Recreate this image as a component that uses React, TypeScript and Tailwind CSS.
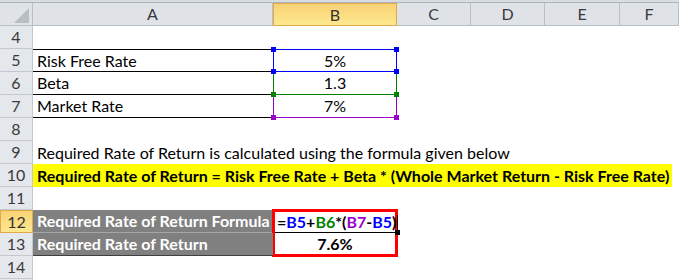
function RowHead({ n, active }: { n?: number; active?: boolean }) {
  if (active) {
    return (
      <div className="flex items-center justify-center border border-[#e0a94c] bg-gradient-to-b from-[#f9d276] to-[#fde88e] text-[#333]">
        {n}
      </div>
    )
  }
  return (
    <div className="flex items-center justify-center border-r border-b border-[#c3c8ce] bg-[#e4e7eb] text-[#3a3a3a]">
      {n}
    </div>
  )
}

function ColHead({ label, active }: { label: string; active?: boolean }) {
  if (active) {
    return (
      <div className="flex items-center justify-center border border-[#e0a94c] bg-gradient-to-b from-[#f9d276] to-[#fde88e] text-[#333]">
        {label}
      </div>
    )
  }
  return (
    <div className="flex items-center justify-center border-r border-b border-[#b9bfc7] bg-[#dfe3e8] text-[#3a3a3a]">
      {label}
    </div>
  )
}

function Handle({ color, pos }: { color: string; pos: string }) {
  return <span className={`absolute h-[5px] w-[5px] ${pos}`} style={{ backgroundColor: color }} />
}

export default function App() {
  return (
    <div className="h-[280px] w-[679px] overflow-hidden bg-white font-['Lato','Liberation_Sans',sans-serif] text-[16px] text-black">
      {/* top strip */}
      <div className="h-[3px] border-b border-[#aeb5bd] bg-[#d9dde2]" />

      <div className="grid grid-cols-[33px_240px_124px_74px_74px_75px_1fr] auto-rows-[23px]">
        {/* header row */}
        <div className="relative border-r border-b border-[#b9bfc7] bg-[#dfe3e8]">
          <svg className="absolute right-[3px] bottom-[2px]" width="15" height="15" viewBox="0 0 15 15">
            <polygon points="15,0 15,15 0,15" fill="#b9bec5" />
          </svg>
        </div>
        <ColHead label="A" />
        <ColHead label="B" active />
        <ColHead label="C" />
        <ColHead label="D" />
        <ColHead label="E" />
        <ColHead label="F" />

        {/* 4 */}
        <RowHead n={4} />
        <div className="col-span-6" />

        {/* 5 */}
        <RowHead n={5} />
        <div className="flex items-center border-y border-black pl-1">Risk Free Rate</div>
        <div className="relative flex items-center justify-center border border-[#0000ff]">
          5%
          <Handle color="#0000ff" pos="-left-[3px] -top-[3px]" />
          <Handle color="#0000ff" pos="-right-[3px] -top-[3px]" />
          <Handle color="#0000ff" pos="-left-[3px] -bottom-[3px] z-20" />
          <Handle color="#0000ff" pos="-right-[3px] -bottom-[3px] z-20" />
        </div>
        <div className="col-span-4" />

        {/* 6 */}
        <RowHead n={6} />
        <div className="flex items-center border-b border-black pl-1">Beta</div>
        <div className="relative flex items-center justify-center border-x border-b border-[#008000]">
          1.3
          <Handle color="#008000" pos="-left-[3px] -bottom-[3px] z-10" />
          <Handle color="#008000" pos="-right-[3px] -bottom-[3px] z-10" />
        </div>
        <div className="col-span-4" />

        {/* 7 */}
        <RowHead n={7} />
        <div className="flex items-center border-b border-black pl-1">Market Rate</div>
        <div className="relative flex items-center justify-center border-x border-b border-[#9900cc]">
          7%
          <Handle color="#9900cc" pos="-left-[3px] -bottom-[3px]" />
          <Handle color="#9900cc" pos="-right-[3px] -bottom-[3px]" />
        </div>
        <div className="col-span-4" />

        {/* 8 */}
        <RowHead n={8} />
        <div className="col-span-6" />

        {/* 9 */}
        <RowHead n={9} />
        <div className="col-span-6 flex items-center whitespace-nowrap pl-1">
          Required Rate of Return is calculated using the formula given below
        </div>

        {/* 10 */}
        <RowHead n={10} />
        <div className="col-span-6 flex">
          <div className="flex w-[639px] items-center whitespace-nowrap bg-[#ffff00] pl-1 font-bold">
            Required Rate of Return = Risk Free Rate + Beta * (Whole Market Return - Risk Free Rate)
          </div>
        </div>

        {/* 11 */}
        <RowHead n={11} />
        <div className="col-span-6" />

        {/* 12 */}
        <RowHead n={12} active />
        <div className="flex items-center whitespace-nowrap border-b border-[#a6a6a6] bg-[#808080] pl-1 font-bold text-white">
          Required Rate of Return Formula
        </div>
        <div className="row-span-2 -m-px flex flex-col border-[3px] border-[#ff0000] font-bold">
          <div className="relative flex h-[21px] shrink-0 items-center whitespace-nowrap border-b border-black pl-[2px]">
            <span>=</span>
            <span className="text-[#0000ff]">B5</span>
            <span>+</span>
            <span className="text-[#008000]">B6</span>
            <span>*(</span>
            <span className="text-[#9900cc]">B7</span>
            <span>-</span>
            <span className="text-[#0000ff]">B5</span>
            <span>)</span>
            <span className="ml-px h-[15px] w-px shrink-0 bg-black" />
            <span className="absolute -right-[5px] -bottom-[3px] h-[5px] w-[5px] bg-black" />
          </div>
          <div className="flex h-[21px] shrink-0 items-center justify-center">7.6%</div>
        </div>
        <div className="col-span-4" />

        {/* 13 */}
        <RowHead n={13} />
        <div className="flex items-center whitespace-nowrap border-b border-[#404040] bg-[#808080] pl-1 font-bold text-white">
          Required Rate of Return
        </div>
        <div className="col-span-4" />

        {/* 14 */}
        <RowHead n={14} />
        <div className="col-span-6" />

        {/* 15, only its top edge shows */}
        <RowHead />
        <div className="col-span-6" />
      </div>
    </div>
  )
}
